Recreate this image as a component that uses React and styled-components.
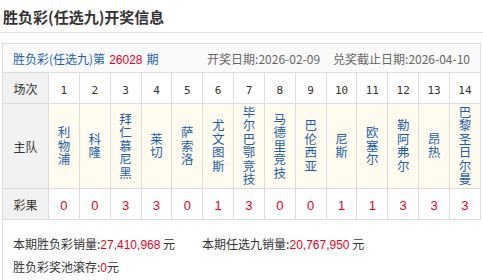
import React from "react";
import styled, { createGlobalStyle } from "styled-components";

const GlobalStyle = createGlobalStyle`
  body {
    margin: 0;
    background: #fff;
    font-family: "Noto Sans CJK SC", "Noto Sans", sans-serif;
    color: #333;
  }
`;

const Title = styled.h2`
  margin: 0;
  height: 32px;
  padding-left: 3px;
  display: flex;
  align-items: center;
  font-size: 15px;
  font-weight: bold;
  color: #333;
  border-bottom: 1px solid #e4e4e4;
`;

const Panel = styled.div`
  width: 479px;
  margin: 10px 0 0 2px;
`;

const InfoBar = styled.div`
  height: 28px;
  border: 1px solid #ddd;
  border-bottom: none;
  background: #fafafa;
  padding: 0 10px;
  display: flex;
  align-items: center;
  justify-content: space-between;
  font-size: 12px;
`;

const Issue = styled.span`
  color: #1b5fab;
`;

const Red = styled.span`
  color: #e8001c;
  font-family: "Liberation Sans", Arial, sans-serif;
  margin: ${(p) => (p.$pad ? "0 4px" : "0")};
`;

const Dates = styled.span`
  color: #666;
  & > span + span {
    margin-left: 13px;
  }
`;

const Table = styled.table`
  width: 100%;
  border-collapse: collapse;
  table-layout: fixed;
`;

const LabelCol = styled.col`
  width: 46px;
`;

const Cell = styled.td`
  border: 1px solid #ddd;
  padding: 0;
  height: ${(p) => p.$h}px;
  text-align: center;
  vertical-align: middle;
  background: ${(p) => (p.$label ? "#f1f1f1" : p.$team ? "#fffbef" : "#fff")};
  font-size: 12px;
  color: #333;
`;

const Num = styled.span`
  font-family: "DejaVu Sans Mono", monospace;
  font-size: 11px;
  color: #333;
`;

const TeamName = styled.span`
  display: inline-block;
  width: 1em;
  font-size: 12.5px;
  line-height: 13.5px;
  color: #1b5fab;
  word-break: break-all;
`;

const Result = styled.span`
  font-family: "Liberation Sans", Arial, sans-serif;
  font-size: 13px;
  color: #e8001c;
`;

const Footer = styled.div`
  margin-left: 2px;
  height: 60px;
  border-left: 1px solid #ddd;
  padding: 13px 0 0 10px;
  font-size: 12px;
  line-height: 22px;
  color: #333;
`;

const FooterLine = styled.div`
  display: flex;
  align-items: baseline;
`;

const Gap = styled.span`
  margin-left: 27px;
`;

const teams = [
  "利物浦", "科隆", "拜仁慕尼黑", "莱切", "萨索洛", "尤文图斯", "毕尔巴鄂竞技",
  "马德里竞技", "巴伦西亚", "尼斯", "欧塞尔", "勒阿弗尔", "昂热", "巴黎圣日尔曼",
];
const results = ["0", "0", "3", "3", "0", "1", "3", "0", "0", "1", "1", "3", "3", "3"];

export default function App() {
  return (
    <>
      <GlobalStyle />
      <Title>胜负彩(任选九)开奖信息</Title>
      <Panel>
        <InfoBar>
          <Issue>
            胜负彩(任选九)第<Red $pad>26028</Red>期
          </Issue>
          <Dates>
            <span>开奖日期:2026-02-09</span>
            <span>兑奖截止日期:2026-04-10</span>
          </Dates>
        </InfoBar>
        <Table>
          <colgroup>
            <LabelCol />
          </colgroup>
          <tbody>
            <tr>
              <Cell $label $h={30}>场次</Cell>
              {teams.map((_, i) => (
                <Cell key={i} $h={30}>
                  <Num>{i + 1}</Num>
                </Cell>
              ))}
            </tr>
            <tr>
              <Cell $label $h={84}>主队</Cell>
              {teams.map((t) => (
                <Cell key={t} $team $h={84}>
                  <TeamName>{t}</TeamName>
                </Cell>
              ))}
            </tr>
            <tr>
              <Cell $label $h={30}>彩果</Cell>
              {results.map((r, i) => (
                <Cell key={i} $h={30}>
                  <Result>{r}</Result>
                </Cell>
              ))}
            </tr>
          </tbody>
        </Table>
      </Panel>
      <Footer>
        <FooterLine>
          本期胜负彩销量:<Red>27,410,968</Red>&nbsp;元
          <Gap>本期任选九销量:</Gap><Red>20,767,950</Red>&nbsp;元
        </FooterLine>
        <FooterLine>
          胜负彩奖池滚存:<Red>0</Red>元
        </FooterLine>
      </Footer>
    </>
  );
}
